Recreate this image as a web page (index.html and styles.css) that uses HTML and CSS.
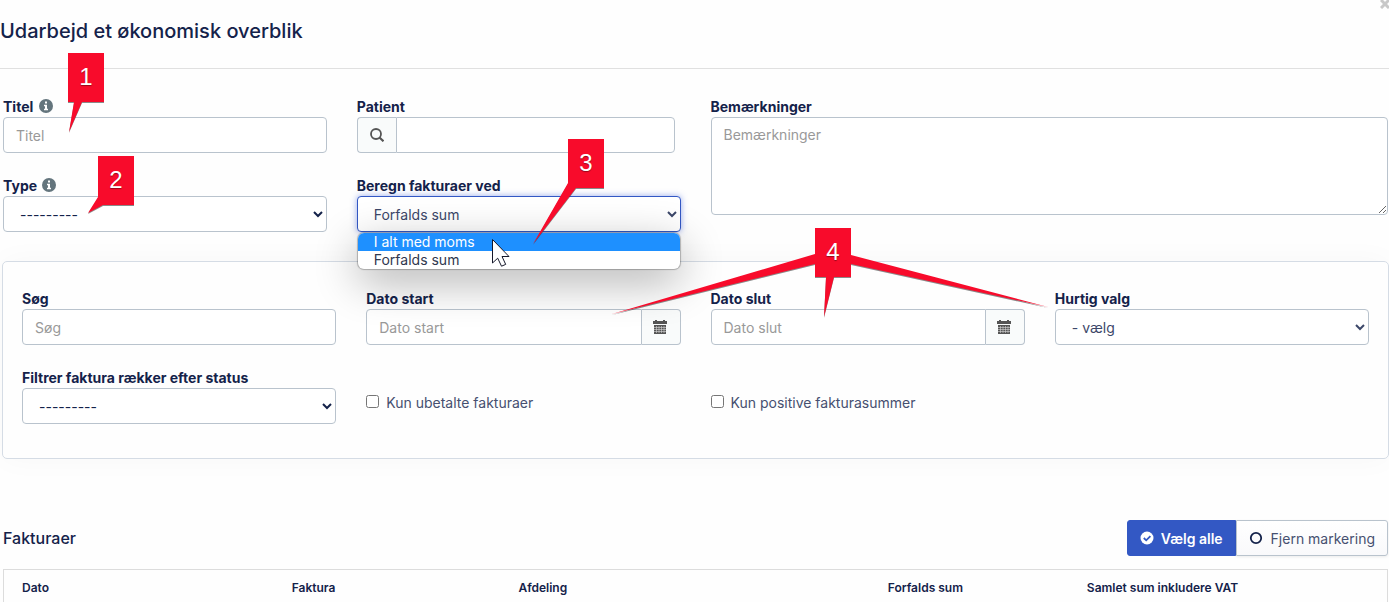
FILE: index.html
```
<!DOCTYPE html>
<html lang="da">
<head>
    <meta charset="UTF-8">
    <meta name="viewport" content="width=device-width, initial-scale=1.0">
    <title>Udarbejd et økonomisk overblik</title>
    <link rel="stylesheet" href="styles.css">
</head>
<body>
    <div class="modal">
        <header class="modal-header">
            <h1 class="modal-title">Udarbejd et økonomisk overblik</h1>
            <button type="button" class="close-btn" aria-label="Luk">
                <svg width="10" height="10" viewBox="0 0 10 10"><path d="M1 1l8 8M9 1l-8 8" stroke="#c8c8c8" stroke-width="3"/></svg>
            </button>
        </header>

        <main class="modal-body">
            <form class="form-grid">
                <div class="field">
                    <label for="title">Titel
                        <svg class="info-icon" viewBox="0 0 14 14"><circle cx="7" cy="7" r="7" fill="#64757d"/><path d="M6 2.5h2v2H6zM5 5.8h3v4h1v1.4H5V9.800h1V7.200H5z" fill="#fff"/></svg>
                    </label>
                    <input type="text" id="title" class="control" placeholder="Titel">
                </div>
                <div class="field">
                    <label for="patient">Patient</label>
                    <div class="input-group patient-group">
                        <span class="addon addon-left">
                            <svg width="14" height="14" viewBox="0 0 14 14"><circle cx="6" cy="6" r="5" fill="none" stroke="#555" stroke-width="1.800"/><path d="M9.500 9.500l4 3.800" stroke="#555" stroke-width="2.200"/></svg>
                        </span>
                        <input type="text" id="patient" class="control">
                    </div>
                </div>
                <div class="field field-notes">
                    <label for="notes">Bemærkninger</label>
                    <textarea id="notes" class="control" placeholder="Bemærkninger"></textarea>
                </div>
                <div class="field">
                    <label for="type">Type
                        <svg class="info-icon" viewBox="0 0 14 14"><circle cx="7" cy="7" r="7" fill="#64757d"/><path d="M6 2.5h2v2H6zM5 5.8h3v4h1v1.4H5V9.800h1V7.200H5z" fill="#fff"/></svg>
                    </label>
                    <select id="type" class="control select-empty"><option>---------</option></select>
                </div>
                <div class="field">
                    <label for="calc">Beregn fakturaer ved</label>
                    <select id="calc" class="control is-open">
                        <option>I alt med moms</option>
                        <option selected>Forfalds sum</option>
                    </select>
                    <ul class="dropdown">
                        <li class="active">I alt med moms</li>
                        <li>Forfalds sum</li>
                    </ul>
                </div>
            </form>

            <form class="panel form-grid">
                <div class="field">
                    <label for="search">Søg</label>
                    <input type="text" id="search" class="control" placeholder="Søg">
                </div>
                <div class="field">
                    <label for="date-start">Dato start</label>
                    <div class="input-group">
                        <input type="text" id="date-start" class="control" placeholder="Dato start">
                        <span class="addon addon-right">
                            <svg width="14" height="14" viewBox="0 0 14 14"><path d="M0 1h2V0h2v1h6V0h2v1h2v3H0zM1 5h12v9H1z" fill="#555"/><path d="M1 7.500h12M1 9.500h12M1 11.500h12M3.500 6v7M6 6v7M8.500 6v7M11 6v7" stroke="#d5d5d5" stroke-width=".6"/></svg>
                        </span>
                    </div>
                </div>
                <div class="field">
                    <label for="date-end">Dato slut</label>
                    <div class="input-group">
                        <input type="text" id="date-end" class="control" placeholder="Dato slut">
                        <span class="addon addon-right">
                            <svg width="14" height="14" viewBox="0 0 14 14"><path d="M0 1h2V0h2v1h6V0h2v1h2v3H0zM1 5h12v9H1z" fill="#555"/><path d="M1 7.500h12M1 9.500h12M1 11.500h12M3.500 6v7M6 6v7M8.500 6v7M11 6v7" stroke="#d5d5d5" stroke-width=".6"/></svg>
                        </span>
                    </div>
                </div>
                <div class="field">
                    <label for="quick">Hurtig valg</label>
                    <select id="quick" class="control"><option>- vælg</option></select>
                </div>
                <div class="field">
                    <label for="status">Filtrer faktura rækker efter status</label>
                    <select id="status" class="control select-empty"><option>---------</option></select>
                </div>
                <label class="check"><input type="checkbox"> Kun ubetalte fakturaer</label>
                <label class="check"><input type="checkbox"> Kun positive fakturasummer</label>
            </form>

            <section class="invoices">
                <div class="invoices-header">
                    <h2>Fakturaer</h2>
                    <div class="btn-group">
                        <button type="button" class="btn btn-primary">
                            <svg width="14" height="14" viewBox="0 0 14 14"><circle cx="7" cy="7" r="6.500" fill="#fff"/><path d="M3.800 7l2.400 2.300 4.200-4.200" fill="none" stroke="#3358c4" stroke-width="1.800"/></svg>
                            Vælg alle
                        </button>
                        <button type="button" class="btn btn-default">
                            <svg width="14" height="14" viewBox="0 0 14 14"><circle cx="7" cy="7" r="5.200" fill="none" stroke="#14224a" stroke-width="1.800"/></svg>
                            Fjern markering
                        </button>
                    </div>
                </div>
                <table class="invoice-table">
                    <thead>
                        <tr>
                            <th class="col-date">Dato</th>
                            <th class="col-invoice">Faktura</th>
                            <th class="col-dept">Afdeling</th>
                            <th class="col-due">Forfalds sum</th>
                            <th>Samlet sum inkludere VAT</th>
                        </tr>
                    </thead>
                </table>
            </section>
        </main>

        <!-- Numbered callouts on top of the form -->
        <svg class="callouts" width="1389" height="602" viewBox="0 0 1389 602">
            <g class="callout">
                <path d="M68 53h36v49H82L69 132L74 102H68z"/>
                <text x="86" y="85">1</text>
            </g>
            <g class="callout">
                <path d="M98 156h36v49h-31L88 213L98 197z"/>
                <text x="116" y="188">2</text>
            </g>
            <g class="callout">
                <path d="M568 139h36v49h-28L533 244L568 183z"/>
                <text x="586" y="171">3</text>
            </g>
            <g class="callout">
                <path d="M815 228h36v27L1048 307L851 264v13h-17L824 317L826 277h-11v-13L612 314L815 254z"/>
                <text x="833" y="260">4</text>
            </g>
            <path class="pointer" d="M492.500 239.500v23.500l5.200-4.800 3.800 8 4.200-1.800-3.700-7.900h7z"/>
        </svg>
    </div>
</body>
</html>
```
FILE: styles.css
```
* {
    box-sizing: border-box;
}
body {
    margin: 0;
    font-family: Inter, sans-serif;
    font-size: 14px;
    line-height: 20px;
    color: #14224a;
    background-color: #fefefe;
}
.modal {
    position: relative;
    height: 100vh;
    overflow: hidden;
}
.modal-header {
    padding: 16px 0 22px;
    border-bottom: 1px solid #e0e0e0;
}
.modal-title {
    margin: 0;
    font-size: 20px;
    font-weight: 500;
    line-height: 30px;
}
.close-btn {
    position: absolute;
    top: -1px;
    right: -1px;
    display: flex;
    padding: 0;
    border: none;
    background: none;
    cursor: pointer;
}
.modal-body {
    padding: 28px 1px 0 3px;
}

/* Form */
.form-grid {
    display: grid;
    grid-template-columns: repeat(4, minmax(0, 1fr));
    gap: 23px 30px;
}
.field {
    position: relative;
    display: flex;
    flex-direction: column;
}
.field label {
    font-weight: 700;
}
.field-notes {
    grid-column: span 2;
    grid-row: span 2;
}
.info-icon {
    width: 14px;
    height: 14px;
    margin-left: 2px;
    vertical-align: -1px;
}
.control {
    width: 100%;
    height: 36px;
    padding: 6px 12px;
    border: 1px solid #b9c3cd;
    border-radius: 4px;
    background-color: #fff;
    color: #3c4769;
    font-family: inherit;
    font-size: 14px;
    line-height: 20px;
    outline: none;
}
.control::placeholder {
    color: #999;
}
textarea.control {
    display: block;
    height: 98px;
    padding-top: 7px;
    resize: both;
}
.select-empty {
    color: #14224a;
}
.control.is-open {
    border-color: #3358c4;
    box-shadow: 0 0 6px rgba(51, 88, 220, 0.5);
}
.input-group {
    display: flex;
}
.patient-group {
    margin-right: 6px;
}
.input-group .control {
    flex: 1;
    min-width: 0;
}
.addon {
    display: flex;
    align-items: center;
    justify-content: center;
    width: 39px;
    border: 1px solid #b9c3cd;
    background-color: #f9fbfb;
}
.addon-left {
    border-right: none;
    border-radius: 4px 0 0 4px;
}
.addon-left + .control {
    border-radius: 0 4px 4px 0;
}
.addon-right {
    padding-right: 2px;
    border-left: none;
    border-radius: 0 4px 4px 0;
}
.input-group .control:first-child {
    border-radius: 4px 0 0 4px;
}
.dropdown {
    position: absolute;
    top: 57px;
    left: 1px;
    right: 1px;
    z-index: 2;
    margin: 0;
    padding: 0;
    list-style: none;
    overflow: hidden;
    border-radius: 6px;
    background-color: #fff;
    color: #30384f;
    line-height: 18px;
    box-shadow: 0 0 1px 1px rgba(0, 0, 0, 0.25), 0 12px 44px rgba(0, 0, 0, 0.32);
}
.dropdown li {
    padding: 0 16px;
}
.dropdown .active {
    background-color: #1e90ff;
    color: #fff;
}

/* Filter panel */
.panel {
    margin: 29px -1px 0;
    padding: 27px 19px 34px;
    border: 1px solid #d5dce5;
    border-radius: 5px;
    box-shadow: 0 0 30px rgba(0, 0, 0, 0.03);
}
.check {
    display: flex;
    align-items: flex-start;
    gap: 7px;
    padding-top: 25px;
    color: #465070;
}
.check input {
    width: 13px;
    height: 13px;
    margin: 2px 0 0;
}

/* Invoices */
.invoices {
    margin-top: 61px;
}
.invoices-header {
    display: flex;
    align-items: center;
    justify-content: space-between;
    margin-bottom: 13px;
}
.invoices-header h2 {
    margin: 0;
    font-size: 16px;
    font-weight: 500;
}
.btn-group {
    display: flex;
}
.btn {
    display: flex;
    align-items: center;
    gap: 7px;
    height: 36px;
    padding: 0 12px;
    border: 1px solid #b9c3cd;
    font-family: inherit;
    font-size: 14px;
    cursor: pointer;
}
.btn-primary {
    border-color: #3358c4;
    border-radius: 3px 0 0 3px;
    background-color: #3358c4;
    color: #fff;
    font-weight: 600;
}
.btn-default {
    gap: 8px;
    border-radius: 0 3px 3px 0;
    background: linear-gradient(#fff, #f9f9fb);
    color: #465070;
    box-shadow: 0 1px 3px rgba(0, 0, 0, 0.08);
}
.invoice-table {
    width: 100%;
    table-layout: fixed;
    border-collapse: separate;
    border-spacing: 0;
    border: 1px solid #dcdcdc;
    border-bottom: none;
}
.invoice-table th {
    padding: 8px 18px;
    font-size: 12px;
    font-weight: 600;
    text-align: left;
}
.col-date {
    width: 19.5%;
}
.col-invoice {
    width: 16.4%;
}
.col-dept {
    width: 26.7%;
}
.col-due {
    width: 14.4%;
}

/* Callouts */
.callouts {
    position: absolute;
    top: 0;
    left: 0;
    z-index: 3;
    pointer-events: none;
}
.callout path {
    fill: #f80b2b;
    filter: drop-shadow(0 1px 0 rgba(60, 60, 60, 0.6));
}
.callout text {
    fill: #fff;
    font-family: "Liberation Sans", sans-serif;
    font-size: 24px;
    text-anchor: middle;
    text-shadow: 0 1px 1px rgba(0, 0, 0, 0.4);
}
.pointer {
    fill: #fff;
    stroke: #14172a;
    stroke-width: 1;
}
```
